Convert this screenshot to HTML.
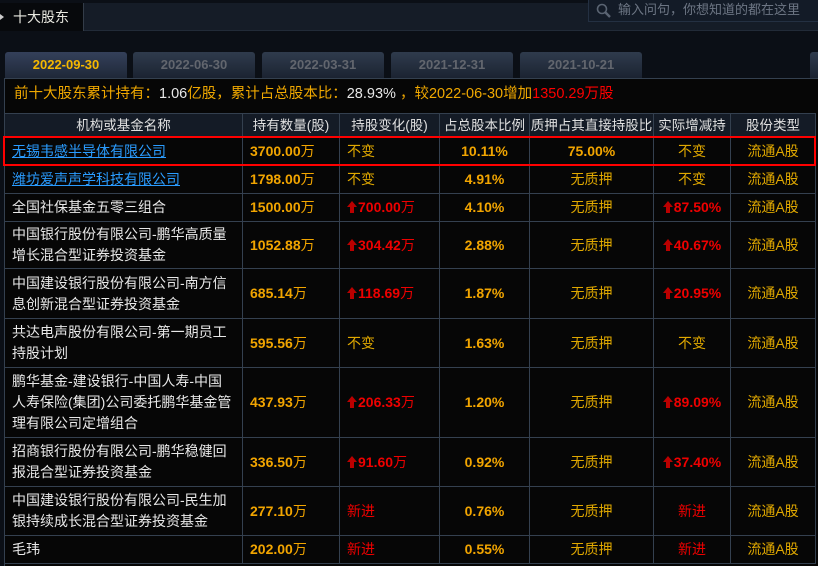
<!DOCTYPE html>
<html><head><meta charset="utf-8"><style>
*{margin:0;padding:0;box-sizing:border-box}
body{width:818px;height:566px;overflow:hidden;background:#0b0f16;font-family:"Liberation Sans","Noto Sans CJK SC",sans-serif;font-size:14px;position:relative}
.top{position:absolute;left:0;top:3px;width:818px;height:28px;background:#151c27;border-bottom:1px solid #222b38}
.title{position:absolute;left:0;top:3px;width:84px;height:28px;background:#07090c;color:#e8e8e0;font-size:14px;line-height:28px;padding-left:13px;border-right:1px solid #333c48}
.title:before{content:"";position:absolute;left:0;top:11px;border:3px solid transparent;border-left:4px solid #ccc}
.search{position:absolute;left:588px;top:0;width:232px;height:22px;background:#131b27;border:1px solid #243042;border-top:none;color:#6d7684;font-size:13px;line-height:20px;padding-left:29px}
.tab{position:absolute;top:52px;height:26px;width:122px;background:linear-gradient(#2f3b4d,#1b2331);border-radius:3px 3px 0 0;color:#62666e;font-weight:bold;font-size:13px;text-align:center;line-height:26px}
.tab.on{color:#f5b800;background:linear-gradient(#34405a,#1f2838)}
.panel{position:absolute;left:4px;top:78px;width:814px;height:488px;background:#060606;border-top:1px solid #34404f;border-left:1px solid #34404f}
.sum{position:absolute;left:14px;top:84px;font-size:14.5px;line-height:20px;color:#f0a800}
.w{color:#e8e8e8}.r{color:#f00}
table{position:absolute;left:4px;top:113px;border-collapse:collapse;table-layout:fixed}
td,th{border:1px solid #34404f;color:#e0a800;font-size:14px;line-height:21px;text-align:center;font-weight:normal;overflow:hidden;white-space:nowrap}
th{background:#141b26;color:#e0e0e0;height:24px;font-size:13.5px}
td.n{text-align:left;padding-left:7px;color:#e8e8e8}
td.l{text-align:left;padding-left:7px}
.b{font-weight:bold;color:#f2a500}
.rb{color:#e00;font-weight:bold}
.rd{color:#e00}
a{color:#2a9cff;text-decoration:underline}
.box{position:absolute;left:3px;top:136px;width:813px;height:30px;border:2px solid #f00}
svg.ar{width:10px;height:12px;vertical-align:-1px;margin-right:1px}
</style></head><body>
<div class="top"></div>
<div class="title">十大股东</div>
<div class="search"><svg style="position:absolute;left:7px;top:3px" width="16" height="15" viewBox="0 0 16 15"><circle cx="6" cy="6" r="4.5" fill="none" stroke="#5a6472" stroke-width="1.6"/><path d="M9.5 9.5L14 14" stroke="#5a6472" stroke-width="2.4"/></svg>输入问句，你想知道的都在这里</div>
<div class="tab on" style="left:5px">2022-09-30</div>
<div class="tab" style="left:133px">2022-06-30</div>
<div class="tab" style="left:262px">2022-03-31</div>
<div class="tab" style="left:391px">2021-12-31</div>
<div class="tab" style="left:520px">2021-10-21</div>
<div class="tab" style="left:810px;width:20px"></div>
<div class="panel"></div>
<div class="sum">前十大股东累计持有：<span class="w">1.06</span>亿股，累计占总股本比：<span class="w">28.93%</span> ，较2022-06-30增加<span class="r">1350.29万股</span></div>
<table>
<colgroup><col style="width:238px"><col style="width:97px"><col style="width:100px"><col style="width:90px"><col style="width:124px"><col style="width:77px"><col style="width:85px"></colgroup>
<tr><th>机构或基金名称</th><th>持有数量(股)</th><th>持股变化(股)</th><th>占总股本比例</th><th>质押占其直接持股比</th><th>实际增减持</th><th>股份类型</th></tr>
<tr style="height:28px"><td class="n"><a>无锡韦感半导体有限公司</a></td><td class="l b">3700.00<span style="font-weight:normal">万</span></td><td class="l">不变</td><td class="b">10.11%</td><td class="b">75.00%</td><td>不变</td><td>流通A股</td></tr>
<tr style="height:28px"><td class="n"><a>潍坊爱声声学科技有限公司</a></td><td class="l b">1798.00<span style="font-weight:normal">万</span></td><td class="l">不变</td><td class="b">4.91%</td><td>无质押</td><td>不变</td><td>流通A股</td></tr>
<tr style="height:28px"><td class="n">全国社保基金五零三组合</td><td class="l b">1500.00<span style="font-weight:normal">万</span></td><td class="l rb"><svg class="ar" viewBox="0 0 10 12"><path d="M5 0L10 6H7V12H3V6H0Z" fill="#b00"/></svg>700.00<span style="font-weight:normal">万</span></td><td class="b">4.10%</td><td>无质押</td><td class="rb"><svg class="ar" viewBox="0 0 10 12"><path d="M5 0L10 6H7V12H3V6H0Z" fill="#b00"/></svg>87.50%</td><td>流通A股</td></tr>
<tr style="height:47px"><td class="n">中国银行股份有限公司-鹏华高质量<br>增长混合型证券投资基金</td><td class="l b">1052.88<span style="font-weight:normal">万</span></td><td class="l rb"><svg class="ar" viewBox="0 0 10 12"><path d="M5 0L10 6H7V12H3V6H0Z" fill="#b00"/></svg>304.42<span style="font-weight:normal">万</span></td><td class="b">2.88%</td><td>无质押</td><td class="rb"><svg class="ar" viewBox="0 0 10 12"><path d="M5 0L10 6H7V12H3V6H0Z" fill="#b00"/></svg>40.67%</td><td>流通A股</td></tr>
<tr style="height:50px"><td class="n">中国建设银行股份有限公司-南方信<br>息创新混合型证券投资基金</td><td class="l b">685.14<span style="font-weight:normal">万</span></td><td class="l rb"><svg class="ar" viewBox="0 0 10 12"><path d="M5 0L10 6H7V12H3V6H0Z" fill="#b00"/></svg>118.69<span style="font-weight:normal">万</span></td><td class="b">1.87%</td><td>无质押</td><td class="rb"><svg class="ar" viewBox="0 0 10 12"><path d="M5 0L10 6H7V12H3V6H0Z" fill="#b00"/></svg>20.95%</td><td>流通A股</td></tr>
<tr style="height:49px"><td class="n">共达电声股份有限公司-第一期员工<br>持股计划</td><td class="l b">595.56<span style="font-weight:normal">万</span></td><td class="l">不变</td><td class="b">1.63%</td><td>无质押</td><td>不变</td><td>流通A股</td></tr>
<tr style="height:70px"><td class="n">鹏华基金-建设银行-中国人寿-中国<br>人寿保险(集团)公司委托鹏华基金管<br>理有限公司定增组合</td><td class="l b">437.93<span style="font-weight:normal">万</span></td><td class="l rb"><svg class="ar" viewBox="0 0 10 12"><path d="M5 0L10 6H7V12H3V6H0Z" fill="#b00"/></svg>206.33<span style="font-weight:normal">万</span></td><td class="b">1.20%</td><td>无质押</td><td class="rb"><svg class="ar" viewBox="0 0 10 12"><path d="M5 0L10 6H7V12H3V6H0Z" fill="#b00"/></svg>89.09%</td><td>流通A股</td></tr>
<tr style="height:49px"><td class="n">招商银行股份有限公司-鹏华稳健回<br>报混合型证券投资基金</td><td class="l b">336.50<span style="font-weight:normal">万</span></td><td class="l rb"><svg class="ar" viewBox="0 0 10 12"><path d="M5 0L10 6H7V12H3V6H0Z" fill="#b00"/></svg>91.60<span style="font-weight:normal">万</span></td><td class="b">0.92%</td><td>无质押</td><td class="rb"><svg class="ar" viewBox="0 0 10 12"><path d="M5 0L10 6H7V12H3V6H0Z" fill="#b00"/></svg>37.40%</td><td>流通A股</td></tr>
<tr style="height:49px"><td class="n">中国建设银行股份有限公司-民生加<br>银持续成长混合型证券投资基金</td><td class="l b">277.10<span style="font-weight:normal">万</span></td><td class="l rd">新进</td><td class="b">0.76%</td><td>无质押</td><td class="rd">新进</td><td>流通A股</td></tr>
<tr style="height:28px"><td class="n">毛玮</td><td class="l b">202.00<span style="font-weight:normal">万</span></td><td class="l rd">新进</td><td class="b">0.55%</td><td>无质押</td><td class="rd">新进</td><td>流通A股</td></tr>
</table>
<div class="box"></div>
</body></html>
